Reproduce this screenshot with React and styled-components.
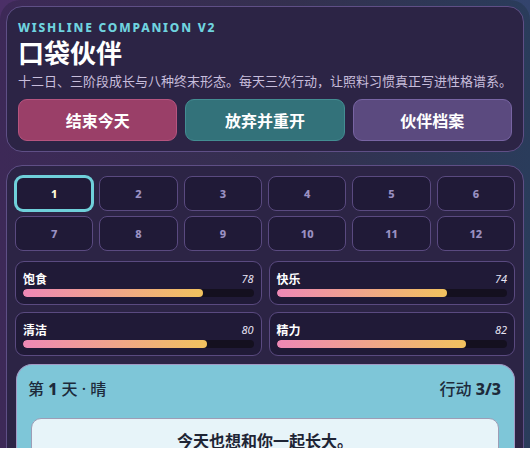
import styled, { createGlobalStyle } from "styled-components";

const GlobalStyle = createGlobalStyle`
  html {
    background: #ffffff;
  }
  body {
    margin: 0;
    font-family: "Noto Sans", "Noto Sans CJK SC", sans-serif;
    -webkit-font-smoothing: antialiased;
  }
`;

const days = [1, 2, 3, 4, 5, 6, 7, 8, 9, 10, 11, 12];

const stats = [
  { label: "饱食", value: 78 },
  { label: "快乐", value: 74 },
  { label: "清洁", value: 80 },
  { label: "精力", value: 82 },
];

const App = () => {
  return (
    <>
      <GlobalStyle />
      <Backdrop>
        <Shell>
          <HeaderCard>
            <Eyebrow>Wishline Companion v2</Eyebrow>
            <Title>口袋伙伴</Title>
            <Subtitle>
              十二日、三阶段成长与八种终末形态。每天三次行动，让照料习惯真正写进性格谱系。
            </Subtitle>
            <Actions>
              <ActionButton $tone="rose">结束今天</ActionButton>
              <ActionButton $tone="teal">放弃并重开</ActionButton>
              <ActionButton $tone="violet">伙伴档案</ActionButton>
            </Actions>
          </HeaderCard>

          <MainCard>
            <DayGrid>
              {days.map((d) => (
                <DayButton key={d} $active={d === 1}>
                  {d}
                </DayButton>
              ))}
            </DayGrid>

            <StatGrid>
              {stats.map((s) => (
                <StatBox key={s.label}>
                  <StatHead>
                    <StatLabel>{s.label}</StatLabel>
                    <StatValue>{s.value}</StatValue>
                  </StatHead>
                  <Track>
                    <Fill style={{ width: `${s.value}%` }} />
                  </Track>
                </StatBox>
              ))}
            </StatGrid>

            <DayPanel>
              <DayHead>
                <span>
                  第 <b>1</b> 天 · 晴
                </span>
                <span>
                  行动 <b>3/3</b>
                </span>
              </DayHead>
              <Message>今天也想和你一起长大。</Message>
            </DayPanel>
          </MainCard>
        </Shell>
      </Backdrop>
    </>
  );
};

const Backdrop = styled.div`
  width: 530px;
  height: 448px;
  background: linear-gradient(90deg, #4b2f67 0%, #3e3766 55%, #33446d 100%);
`;

const Shell = styled.div`
  box-sizing: border-box;
  width: 530px;
  min-height: 468px;
  padding: 6px;
  border-radius: 20px;
  display: flex;
  flex-direction: column;
  gap: 13px;
  background: linear-gradient(90deg, #3d2957 0%, #34304f 55%, #2a3c5b 100%);
`;

const Card = styled.section`
  box-sizing: border-box;
  width: 518px;
  background: #2c2445;
  border: 1px solid #5f4f86;
  border-radius: 16px;
`;

const HeaderCard = styled(Card)`
  padding: 13px 11px 10px;
`;

const Eyebrow = styled.div`
  font-size: 12px;
  line-height: 16px;
  font-weight: 800;
  letter-spacing: 1.8px;
  text-transform: uppercase;
  color: #6fd3df;
`;

const Title = styled.h1`
  margin: 0;
  font-family: "Noto Sans CJK SC", sans-serif;
  font-size: 26px;
  line-height: 32px;
  font-weight: 700;
  color: #ffffff;
`;

const Subtitle = styled.p`
  margin: 4px 0 0;
  font-family: "Noto Sans CJK SC", sans-serif;
  font-size: 13px;
  line-height: 18px;
  color: #c8bedc;
  white-space: nowrap;
`;

const tones = {
  rose: { bg: "#9a3f68", border: "#b6547f" },
  teal: { bg: "#33727a", border: "#438d92" },
  violet: { bg: "#5b4a7f", border: "#7864a3" },
};

const Actions = styled.div`
  margin-top: 9px;
  display: grid;
  grid-template-columns: repeat(3, 1fr);
  gap: 8px;
`;

const ActionButton = styled.button`
  height: 42px;
  border-radius: 9px;
  border: 1px solid ${(p) => tones[p.$tone].border};
  background: ${(p) => tones[p.$tone].bg};
  color: #ffffff;
  font-family: "Noto Sans CJK SC", sans-serif;
  font-size: 16px;
  font-weight: 700;
  cursor: pointer;
`;

const MainCard = styled(Card)`
  flex: 1;
  padding: 10px 8px 0;
  display: flex;
  flex-direction: column;
  gap: 10px;
`;

const DayGrid = styled.div`
  display: grid;
  grid-template-columns: repeat(6, 1fr);
  gap: 5px 6px;
`;

const DayButton = styled.button`
  height: 35px;
  border-radius: 8px;
  background: #201a37;
  border: ${(p) => (p.$active ? "2px solid #6fd0da" : "1px solid #5a4a80")};
  box-shadow: ${(p) => (p.$active ? "0 0 0 1px #6fd0da" : "none")};
  color: ${(p) => (p.$active ? "#fff7d8" : "#9a90c2")};
  font-family: "Noto Sans", sans-serif;
  font-size: 11px;
  font-weight: 800;
  cursor: pointer;
`;

const StatGrid = styled.div`
  display: grid;
  grid-template-columns: 1fr 1fr;
  gap: 7px;
`;

const StatBox = styled.div`
  padding: 7px;
  background: #201a37;
  border: 1px solid #5a4a80;
  border-radius: 9px;
`;

const StatHead = styled.div`
  display: flex;
  justify-content: space-between;
  align-items: center;
  height: 18px;
  margin-bottom: 2px;
`;

const StatLabel = styled.span`
  font-family: "Noto Sans CJK SC", sans-serif;
  font-size: 12px;
  font-weight: 700;
  color: #ffffff;
`;

const StatValue = styled.span`
  font-family: "Noto Sans", sans-serif;
  font-size: 11px;
  font-style: italic;
  color: #e8e4f4;
`;

const Track = styled.div`
  height: 8px;
  border-radius: 4px;
  background: #14101f;
  overflow: hidden;
`;

const Fill = styled.div`
  height: 100%;
  border-radius: 4px;
  background: linear-gradient(90deg, #ee88b6 0%, #f2c25e 100%);
`;

const DayPanel = styled.div`
  flex: 1;
  margin: -2px 0 0 1px;
  padding: 12px 13px 12px 11px;
  background: #7ec6d8;
  border: 1px solid #a29ac4;
  border-bottom: none;
  border-radius: 16px 16px 0 0;
`;

const DayHead = styled.div`
  display: flex;
  justify-content: space-between;
  align-items: center;
  height: 22px;
  margin-bottom: 19px;
  font-family: "Noto Sans", "Noto Sans CJK SC", sans-serif;
  font-size: 16px;
  font-weight: 500;
  color: #1d2a3b;

  b {
    font-weight: 800;
  }
`;

const Message = styled.div`
  margin: 0 2px 0 3px;
  padding: 10px 12px 20px;
  background: #e7f4f9;
  border: 1px solid #9d9db6;
  border-radius: 10px;
  text-align: center;
  font-family: "Noto Sans CJK SC", sans-serif;
  font-size: 16px;
  line-height: 22px;
  font-weight: 700;
  color: #1f2535;
`;

export default App;
